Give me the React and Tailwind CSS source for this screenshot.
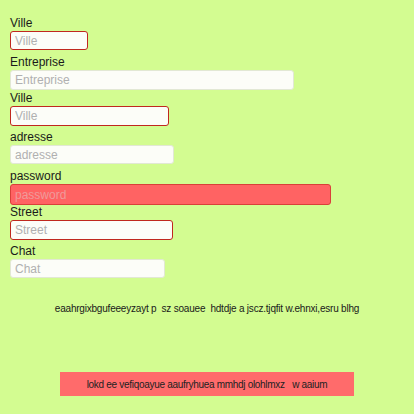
const fields = [
  { label: 'Ville', w: 'w-[78px]', h: 'h-[19px]', mt: 'mt-0', kind: 'error' },
  { label: 'Entreprise', w: 'w-[284px]', h: 'h-[20px]', mt: 'mt-[5px]', kind: 'plain' },
  { label: 'Ville', w: 'w-[159px]', h: 'h-[20px]', mt: 'mt-[1px]', kind: 'error' },
  { label: 'adresse', w: 'w-[164px]', h: 'h-[19px]', mt: 'mt-[4px]', kind: 'plain' },
  { label: 'password', w: 'w-[321px]', h: 'h-[21px]', mt: 'mt-[5px]', kind: 'filled' },
  { label: 'Street', w: 'w-[163px]', h: 'h-[20px]', mt: 'mt-0', kind: 'error' },
  { label: 'Chat', w: 'w-[155px]', h: 'h-[19px]', mt: 'mt-[4px]', kind: 'plain' },
];

const inputStyles = {
  error: 'border-[#c0281e] bg-[#fcfdf8] placeholder:text-[#b0b0b0]',
  plain: 'border-[#e2e8d4] bg-[#fcfdf8] placeholder:text-[#b0b0b0]',
  filled: 'border-[#d8403a] bg-[#ff6363] placeholder:text-[#f09a9a]',
};

export default function App() {
  return (
    <div className="w-[414px] h-[414px] bg-[#d3fc91] font-['Liberation_Sans',Arial,sans-serif] text-[#1a1a1a] overflow-hidden">
      <div className="flex flex-col pt-[16px] px-[10px]">
        {fields.map((f, i) => (
          <div key={i} className={`${f.mt} flex flex-col`}>
            <label className="text-[12px] leading-[14px] mb-[1px]">{f.label}</label>
            <input
              type="text"
              placeholder={f.label}
              className={`${f.w} ${f.h} ${inputStyles[f.kind]} border rounded-[3px] px-[4px] text-[12px] outline-none`}
            />
          </div>
        ))}
      </div>
      <div className="flex justify-center mt-[24px]">
        <span className="text-[10px] leading-[13px] tracking-[-0.21px] whitespace-nowrap">
          eaahrgixbgufeeeyzayt p&nbsp;&nbsp;sz soauee&nbsp;&nbsp;hdtdje a jscz.tjqfit w.ehnxi,esru blhg
        </span>
      </div>
      <div className="flex justify-center mt-[57px]">
        <button className="w-[294px] h-[24px] bg-[#ff6b6b] text-[10px] tracking-[-0.3px] text-[#222] whitespace-pre">
          {'lokd ee vefiqoayue aaufryhuea mmhdj olohlmxz   w aaium'}
        </button>
      </div>
    </div>
  );
}
